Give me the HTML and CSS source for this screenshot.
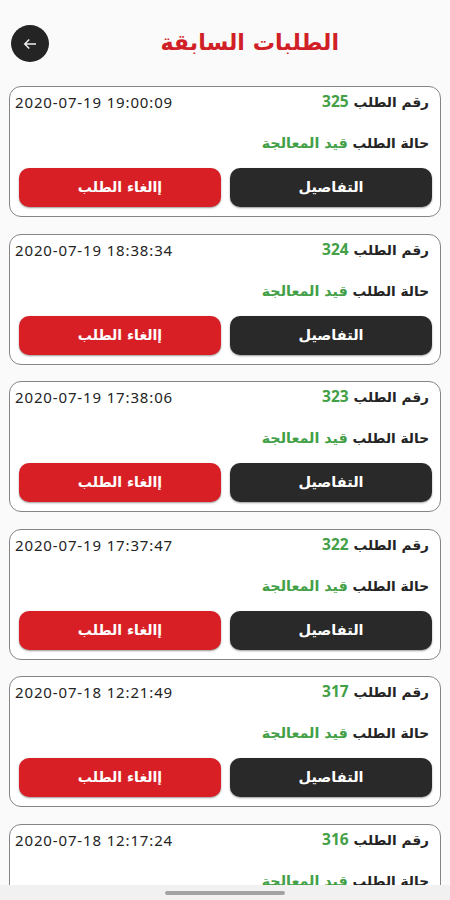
FILE: index.html
```html
<!DOCTYPE html>
<html lang="ar" dir="rtl"><head><meta charset="utf-8"><title>الطلبات السابقة</title><link rel="stylesheet" href="styles.css"></head>
<body>
<header class="header"><h1 class="title">الطلبات السابقة</h1><button class="back" aria-label="رجوع"><svg viewBox="0 0 24 24" width="18" height="18"><path d="M20 12H5M11 6l-6 6 6 6"/></svg></button></header>
<main class="orders" id="orders"></main>
<footer class="nav"><span class="handle"></span></footer>
<script src="app.js"></script>
</body></html>
```
FILE: styles.css
```css
* { box-sizing: border-box; }
body { margin: 0; height: 900px; overflow: hidden; display: flex; flex-direction: column; background: #fafafa; color: #242424; font-family: "DejaVu Sans", sans-serif; }
.header { flex: 0 0 86px; display: flex; justify-content: space-between; align-items: center; padding: 1px 111px 0 11px; }
.title { margin: 0; padding-bottom: 3px; white-space: nowrap; color: #d01f27; font-size: 22.2px; line-height: 36px; }
.back { width: 38px; height: 37px; padding: 0; border: 0; border-radius: 50%; background: #242424; display: grid; place-items: center; }
.back svg { fill: none; stroke: #eee; stroke-width: 2; }
.orders { flex: 1; min-height: 0; overflow: hidden; display: flex; flex-direction: column; gap: 16.5px; padding: 0 9px; }
.card { flex: 0 0 131px; border: 1px solid #858585; border-radius: 12px; background: #fff; padding: 3px 8px 0 9px; }
.row { display: flex; justify-content: space-between; height: 24px; line-height: 24px; white-space: nowrap; }
.label, .status { font-size: 13.7px; font-weight: bold; padding-right: 3px; }
.label { line-height: 22px; }
.value { color: #43a047; }
.number { font-family: "Open Sans", sans-serif; font-size: 15.5px; letter-spacing: .8px; }
.status { line-height: 24px; margin-top: 17px; }
.status .value { font-size: 14.3px; }
.date { font-family: "Noto Sans", sans-serif; font-size: 15px; letter-spacing: .86px; margin-left: -4px; }
.actions { display: grid; grid-template-columns: 1fr 1fr; gap: 9px; margin-top: 13px; }
.btn { height: 39px; padding: 0 0 1px; border: 0; border-radius: 10px; color: #fff; font: bold 14.5px "DejaVu Sans", sans-serif; box-shadow: 0 1px 2px #0006; }
.dark { background: #292929; }
.red { background: #d81f26; font-size: 14px; }
.nav { flex: 0 0 15px; background: #f1f1f1; display: flex; align-items: center; justify-content: center; }
.handle { width: 120px; height: 4px; border-radius: 2px; background: #a3a3a3; }
```
FILE: app.js
```js
const orders = [[325,"2020-07-19 19:00:09"],[324,"2020-07-19 18:38:34"],[323,"2020-07-19 17:38:06"],[322,"2020-07-19 17:37:47"],[317,"2020-07-18 12:21:49"],[316,"2020-07-18 12:17:24"]];
document.getElementById("orders").innerHTML = orders.map(([id, date], i) => `
<article class="card"><div class="row"><span class="label">رقم الطلب <span class="value number">${id}</span></span><span class="date" dir="ltr">${date}</span></div>
<div class="status"><span>حالة الطلب <span class="value">قيد المعالجة</span></span></div>
${i < 5 ? '<div class="actions"><button class="btn dark">التفاصيل</button><button class="btn red">إالغاء الطلب</button></div>' : ""}</article>`).join("");
```
